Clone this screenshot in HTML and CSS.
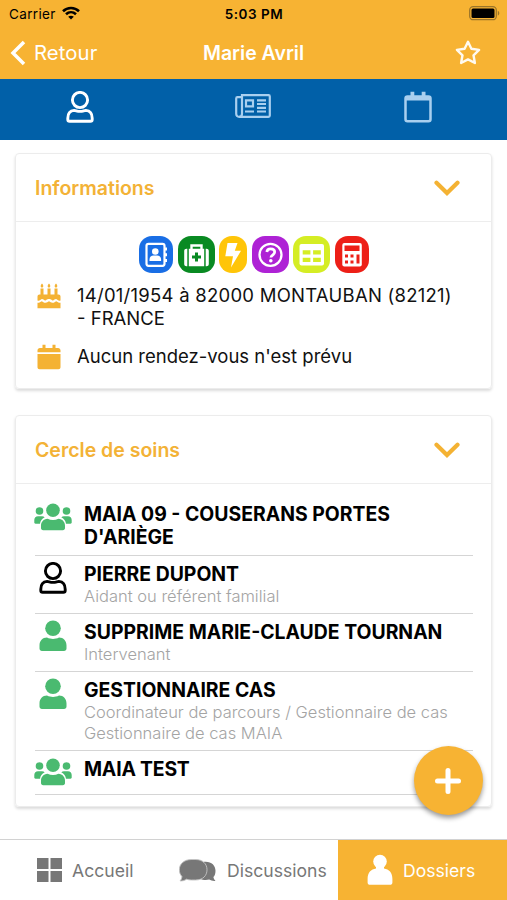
FILE: index.html
```html
<!DOCTYPE html>
<html lang="fr">
<head>
<meta charset="utf-8">
<meta name="viewport" content="width=device-width, initial-scale=1">
<title>Marie Avril</title>
<link rel="stylesheet" href="styles.css">
</head>
<body>
<svg class="defs" width="0" height="0" aria-hidden="true">
  <symbol id="user-outline" viewBox="0 0 28 32"><g fill="none" stroke="currentColor" stroke-width="2.900"><circle cx="14" cy="9" r="7.600"/><path d="M8.200 19.400C4 19.800 1.800 23 1.800 27.200v1.200c0 1 .8 1.800 1.800 1.800h20.800c1 0 1.800-.8 1.800-1.800v-1.200c0-4.200-2.200-7.400-6.400-7.800-1.500 0-3 1-5.800 1s-4.300-1-5.800-1z"/></g></symbol>
  <symbol id="user-solid" viewBox="0 0 28 32"><g fill="currentColor"><circle cx="14" cy="8.300" r="7.800"/><path d="M8 17.500c2 1 4 1.400 6 1.400s4-.4 6-1.400c4.500 0 7.500 3.500 7.500 8v3c0 1.500-1 2.500-2.500 2.500H3c-1.500 0-2.500-1-2.500-2.500v-3c0-4.500 3-8 7.500-8z"/></g></symbol>
  <symbol id="group" viewBox="0 0 38 28"><g fill="currentColor"><circle cx="19" cy="7.300" r="6.800"/><circle cx="5.500" cy="8" r="3.800"/><circle cx="32.500" cy="8" r="3.800"/><path d="M13.500 15.800c3.500 1.600 7.500 1.600 11 0 4 .2 6.500 3.200 6.500 7v2.200c0 1.400-.9 2.200-2.200 2.200H9.200C7.900 27.200 7 26.400 7 25v-2.200c0-3.800 2.500-6.800 6.500-7z"/><path d="M4 13.200h4c1 0 2 .4 2.700 1-2.800 1.500-4.300 3.600-4.700 6.600H1.500C.8 20.800.3 20.300.3 19.600V17c0-2.200 1.500-3.800 3.700-3.800zM34 13.200h-4c-1 0-2 .4-2.700 1 2.800 1.500 4.300 3.600 4.700 6.600h4.500c.7 0 1.200-.5 1.200-1.200V17c0-2.200-1.500-3.800-3.700-3.800z"/></g></symbol>
  <symbol id="chevron" viewBox="0 0 26 16"><path d="M2.500 2.800L13 13 23.500 2.800" fill="none" stroke="currentColor" stroke-width="4.200" stroke-linecap="round"/></symbol>
</svg>

<header class="top">
  <div class="status">
    <div class="carrier"><span>Carrier</span>
      <svg class="wifi" viewBox="0 0 18 14"><g fill="none" stroke="#000" stroke-width="2.600"><path d="M1 5.200c4.500-4.300 11.500-4.300 16 0"/><path d="M4 8.300c2.900-2.700 7.100-2.700 10 0"/></g><path d="M9 13.600l-2.800-2.900c1.600-1.400 4-1.400 5.600 0z"/></svg>
    </div>
    <div class="time">5:03 PM</div>
    <svg class="battery" viewBox="0 0 31 15"><rect x=".7" y=".7" width="26.600" height="13" rx="3.500" fill="none" stroke="#9b7529" stroke-width="1.300"/><rect x="2.500" y="2.500" width="23" height="9.400" rx="1.500"/><path d="M28.800 4.800c2 .7 2 4.100 0 4.800z" fill="#9b7529"/></svg>
  </div>
  <div class="nav">
    <div class="back"><svg viewBox="0 0 16 26"><path d="M14 2L3 13l11 11" fill="none" stroke="#fff" stroke-width="3.500"/></svg><span>Retour</span></div>
    <h1>Marie Avril</h1>
    <svg class="star" viewBox="0 0 26 26"><path d="M13 1.800l3.400 7 7.700 1.100-5.600 5.400 1.400 7.700-6.900-3.600L6.100 23l1.400-7.700-5.600-5.400 7.700-1.100z" fill="none" stroke="#fffaf0" stroke-width="2.400" stroke-linejoin="round"/></svg>
  </div>
</header>

<nav class="sections">
  <div class="active"><svg width="28" height="32"><use href="#user-outline"/></svg></div>
  <div><svg class="news" viewBox="0 0 36 24"><g fill="none" stroke="currentColor" stroke-width="2.200"><path d="M7 1.200h26.500c.8 0 1.300.5 1.300 1.300v19c0 .8-.5 1.300-1.300 1.300H4.200c-1.800 0-3-1.200-3-3V4.500c0-.9.400-1.300 1.300-1.300H7zM7 1.200v18.500c0 1.800-1 3-2.800 3"/><path d="M11 6.300h7v6h-7z"/><path d="M10 17.500h9M22 6.300h9M22 10h9M22 13.800h9M22 17.500h9"/></g></svg></div>
  <div><svg class="cal" viewBox="0 0 28 32"><path d="M3.500 5.500h21c1.200 0 2 .8 2 2v20.800c0 1.200-.8 2-2 2h-21c-1.200 0-2-.8-2-2V7.500c0-1.200.8-2 2-2z" fill="none" stroke="currentColor" stroke-width="2.500"/><path d="M1 5h26v4.500H1zM6.500.8h3.800V6H6.500zM17.700.8h3.800V6h-3.800z" fill="currentColor"/></svg></div>
</nav>

<main>
  <section class="card info">
    <header><h2>Informations</h2><svg class="chevron"><use href="#chevron"/></svg></header>
    <div class="badges">
      <span class="badge blue"><svg viewBox="0 0 34 37"><rect x="7.500" y="7.800" width="18" height="22" rx="2" fill="none" stroke="#fff" stroke-width="2.200"/><circle cx="16.300" cy="15.500" r="3.300" fill="#fff"/><path d="M10.500 25v-1.500c0-2.400 1.800-4 4-4h3.600c2.200 0 4 1.600 4 4V25zM26 11.500h2v3h-2zM26 17.300h2v3h-2zM26 23h2v3h-2z" fill="#fff"/></svg></span>
      <span class="badge green"><svg viewBox="0 0 37 37"><path d="M13.500 13V9.500h10V13" fill="none" stroke="#fff" stroke-width="2.400"/><path d="M10.800 12.800h15.400v17.400H10.800zM9.300 12.800v17.400H8.500c-1.300 0-2.300-1-2.300-2.300V15c0-1.300 1-2.200 2.300-2.200zM27.700 12.800v17.400h.8c1.300 0 2.300-1 2.300-2.300V15c0-1.300-1-2.200-2.300-2.200z" fill="#fff"/><path d="M18.500 16.500v9M14 21h9" stroke="#098a22" stroke-width="3"/></svg></span>
      <span class="badge yellow"><svg viewBox="0 0 28 37"><path d="M8.500 7h10l-2.700 7.800H22L12 31.500l2-11.200H6.300z" fill="#fff"/></svg></span>
      <span class="badge purple"><svg viewBox="0 0 37 37"><circle cx="18.500" cy="18.800" r="11" fill="none" stroke="#fff" stroke-width="2.300"/><path d="M14.800 16c.2-2 1.700-3.200 3.900-3.200 2.400 0 4 1.300 4 3.300 0 3-3.800 2.800-3.800 5.400" fill="none" stroke="#fff" stroke-width="2.700"/><circle cx="18.800" cy="24.700" r="1.800" fill="#fff"/></svg></span>
      <span class="badge lime"><svg viewBox="0 0 37 37"><rect x="6.500" y="8" width="24.500" height="21.500" rx="2" fill="#fff"/><path d="M9.700 14.300h7.700v4.200H9.700zM20.100 14.300h7.700v4.200h-7.700zM9.700 21.700h7.700v4.300H9.700zM20.100 21.700h7.700V26h-7.700z" fill="#d5ed24"/></svg></span>
      <span class="badge red"><svg viewBox="0 0 34 37"><rect x="7.300" y="7" width="19.500" height="23.500" rx="2" fill="#fff"/><path d="M9.500 9.500h15v5.500h-15zM10 18.500h3v3h-3zM15.500 18.500h3v3h-3zM10 24.500h3v3h-3zM15.500 24.500h3v3h-3zM21.500 18.500h3v9h-3z" fill="#ed1f17"/></svg></span>
    </div>
    <div class="fact birth">
      <svg viewBox="0 0 24 26"><path d="M3.500 5.500h3v7h-3zM10.500 5.500h3v7h-3zM17.500 5.500h3v7h-3zM5 .5c2 2 1.500 4 0 4s-2-2 0-4zM12 .5c2 2 1.500 4 0 4s-2-2 0-4zM19 .5c2 2 1.500 4 0 4s-2-2 0-4zM2.500 11.500h19c1.200 0 2 .8 2 2v4c-2 .8-3-.9-4.300-1.400-2.300.3-2.400 1.900-3.700 1.400-1.200-.5-1.800-1.700-3.500-1.400-1.700-.3-2.300.9-3.500 1.400-1.300.5-1.400-1.100-3.700-1.400C3.500 16.600 2.500 18.300.5 17.500v-4c0-1.200.8-2 2-2zM.5 19.800c2 .2 2.800-1.200 4.300-1.600 1.300.4 2 1.700 3.700 1.600 1.500-.1 2.200-1.200 3.500-1.600 1.300.4 2 1.500 3.500 1.600 1.700.1 2.400-1.200 3.700-1.600 1.500.4 2.300 1.800 4.300 1.600v5.400H.5z" fill="currentColor"/></svg>
      <p><span class="line first">14/01/1954 à 82000 MONTAUBAN (82121)</span><span class="line">- FRANCE</span></p>
    </div>
    <div class="fact meet">
      <svg viewBox="0 0 24 26"><path d="M3 4h2.500V.7h3V4h7V.7h3V4H21c1.500 0 2.500 1 2.500 2.300v2H.5v-2C.5 5 1.500 4 3 4zM.5 10h23v13.300c0 1.200-.8 2-2 2h-19c-1.200 0-2-.8-2-2z" fill="currentColor"/></svg>
      <p>Aucun rendez-vous n'est prévu</p>
    </div>
  </section>

  <section class="card care">
    <header><h2>Cercle de soins</h2><svg class="chevron"><use href="#chevron"/></svg></header>
    <ul>
      <li><svg class="grp"><use href="#group"/></svg><div><h3>MAIA 09 - COUSERANS PORTES<br>D'ARIÈGE</h3></div></li>
      <li><svg class="usr dark"><use href="#user-outline"/></svg><div><h3>PIERRE DUPONT</h3><p>Aidant ou référent familial</p></div></li>
      <li><svg class="usr"><use href="#user-solid"/></svg><div><h3>SUPPRIME MARIE-CLAUDE TOURNAN</h3><p>Intervenant</p></div></li>
      <li><svg class="usr"><use href="#user-solid"/></svg><div><h3>GESTIONNAIRE CAS</h3><p>Coordinateur de parcours / Gestionnaire de cas<br>Gestionnaire de cas MAIA</p></div></li>
      <li><svg class="grp"><use href="#group"/></svg><div><h3 class="short">MAIA TEST</h3></div></li>
    </ul>
  </section>
</main>

<button class="fab" aria-label="Ajouter"><svg viewBox="0 0 26 26"><path d="M13 2.500v21M2.500 13h21" stroke="#fff" stroke-width="5" stroke-linecap="round"/></svg></button>

<footer class="tabs">
  <div class="home"><svg viewBox="0 0 25 24"><path d="M0 0h11.500v11H0zM13.500 0H25v11H13.500zM0 13h11.500v11H0zM13.500 13H25v11H13.500z" fill="currentColor"/></svg><span>Accueil</span></div>
  <div class="talk"><svg viewBox="0 0 38 23"><g fill="currentColor"><path d="M25 2.800c7-.8 11.500 3.400 11.500 9 0 3-.7 5-2.100 6.300.2 1.600.9 2.700 2.100 3.800-2.500.2-4.700-.3-6.300-1.300-3 .9-6.500.6-9.500-1z"/><path d="M12.500.5h4C24 .5 28 5 28 10.800S24 21 16.500 21h-4c-2 0-3.500-.3-5-.8-1.800 1.300-4 1.900-6.500 1.700 1.200-1.200 1.800-2.600 1.900-4.400C1.200 15.700.3 13.300.3 10.800.3 5 5 .5 12.500.5z" stroke="#c4c4c4" stroke-width=".9"/></g></svg><span>Discussions</span></div>
  <div class="files"><svg class="person" viewBox="0 0 26 32"><g fill="currentColor"><circle cx="13" cy="7.500" r="6.800"/><path d="M9 12.500h8v2c5 .8 8.400 4 8.400 10.500v3.500c0 1.500-1 2.300-2.400 2.300H3c-1.400 0-2.400-.8-2.400-2.300V25C.6 18.500 4 15.300 9 14.500z"/></g></svg><span>Dossiers</span></div>
</footer>
</body>
</html>
```
FILE: styles.css
```css
* { box-sizing: border-box; }

body {
  margin: 0;
  height: 900px;
  display: flex;
  flex-direction: column;
  position: relative;
  overflow: hidden;
  background: #fff;
  color: #000;
  font-family: Inter, "Liberation Sans", sans-serif;
}

h1, h2, h3, p, ul { margin: 0; padding: 0; }
svg { display: block; flex: none; }
.defs { position: absolute; }

.top { height: 79px; background: #f7b333; }

.status {
  height: 28px;
  display: grid;
  grid-template-columns: 1fr auto 1fr;
  align-items: center;
  padding: 0 7px 0 9px;
  font-size: 13.5px;
}
.carrier { display: flex; align-items: center; gap: 6px; }
.carrier span { letter-spacing: 0.35px; }
.wifi { width: 18px; height: 14px; margin-top: -2px; }
.time { font-weight: 600; letter-spacing: 0.5px; margin-left: -1px; }
.battery { width: 31px; height: 15px; justify-self: end; margin-top: -1px; }

.nav {
  height: 49px;
  display: grid;
  grid-template-columns: 1fr auto 1fr;
  align-items: center;
  padding: 0 26px 0 10px;
  color: #fff;
}
.nav h1 { font-size: 19.5px; font-weight: 600; margin-left: 16px; }
.back { display: flex; align-items: center; gap: 8px; font-size: 20.3px; letter-spacing: 0.1px; }
.back svg { width: 16px; height: 26px; }
.star { width: 26px; height: 26px; justify-self: end; }

.sections {
  height: 61px;
  display: grid;
  grid-template-columns: 160px 1fr 178px;
  background: #0160a8;
  color: #a9cfef;
}
.sections > div { display: flex; justify-content: center; padding-top: 12px; }
.sections .active { color: #fff; }
.news { width: 36px; height: 24px; margin: 3px 0 0 17px; }
.cal { width: 28px; height: 32px; }

main { padding: 13px 15px 0; display: flex; flex-direction: column; gap: 26px; }

.card {
  border: 1px solid #ececec;
  border-radius: 4px;
  box-shadow: 0 2px 3px rgba(0, 0, 0, 0.14);
}
.card header {
  height: 68px;
  display: flex;
  align-items: center;
  justify-content: space-between;
  padding: 0 31px 0 19px;
  border-bottom: 1px solid #ededed;
}
.card h2 { font-size: 19.5px; font-weight: 600; color: #f3b236; }
.chevron { width: 26px; height: 16px; color: #f4b233; }
.info { height: 236px; }
.care { height: 392px; }

.badges { display: flex; justify-content: center; gap: 4.5px; padding: 14px 0 0 1px; }
.badge { height: 37px; border-radius: 13px; }
.badge svg { height: 37px; }
.blue { width: 34px; background: #196ee5; }
.green { width: 37px; background: #098a22; }
.yellow { width: 28px; background: #ffc508; }
.purple { width: 37px; background: #ae22d5; }
.lime { width: 37px; background: #d5ed24; }
.red { width: 34px; background: #ed1f17; }

.fact {
  display: flex;
  gap: 16px;
  padding-left: 21px;
  font-size: 18.5px;
  line-height: 23px;
  color: #111;
}
.fact svg { width: 24px; height: 26px; margin-top: -1px; color: #f4b233; }
.fact .line { display: block; white-space: nowrap; }
.fact .first { letter-spacing: 0.25px; }
.birth { margin-top: 11px; }
.meet { margin-top: 15px; }

.care ul { list-style: none; padding: 12px 18px 0 19px; }
.care li {
  display: flex;
  min-height: 44px;
  padding: 7px 0 6px;
  border-bottom: 1px solid #d5d5d5;
  white-space: nowrap;
}
.care li > div { margin-left: 11px; }
.care li > svg { color: #4aba70; }
.grp { width: 38px; height: 28px; }
.care li > .grp { margin-left: -1px; }
.care li > .grp + div { margin-left: 12px; }
.usr { width: 28px; height: 32px; margin: -1px 6px 0 4px; }
.care li > .dark { color: #000; }
.care h3 { font-size: 19.4px; font-weight: 700; line-height: 23px; }
.care .short { letter-spacing: -0.2px; }
.care p { font-size: 16.5px; font-weight: 300; line-height: 21px; color: #a4a4a4; }

.fab {
  position: absolute;
  left: 414px;
  top: 746px;
  width: 69px;
  height: 69px;
  display: grid;
  place-items: center;
  padding: 0;
  border: 0;
  border-radius: 50%;
  background: #f7b333;
  box-shadow: 0 3px 5px rgba(0, 0, 0, 0.4);
}
.fab svg { width: 26px; height: 26px; margin-left: -1px; }

.tabs {
  height: 61px;
  margin-top: auto;
  display: grid;
  grid-template-columns: 169px 169px 169px;
  border-top: 1px solid #d2d2d2;
  color: #777;
  font-size: 17.6px;
}
.tabs > div { display: flex; align-items: center; gap: 10px; white-space: nowrap; }
.home { padding-left: 37px; }
.home svg { width: 25px; height: 24px; }
.talk { padding-left: 10px; }
.talk svg { width: 38px; height: 23px; }
.files { padding-left: 29px; background: #f7b333; color: #fff; }
.person { width: 26px; height: 32px; }
```
